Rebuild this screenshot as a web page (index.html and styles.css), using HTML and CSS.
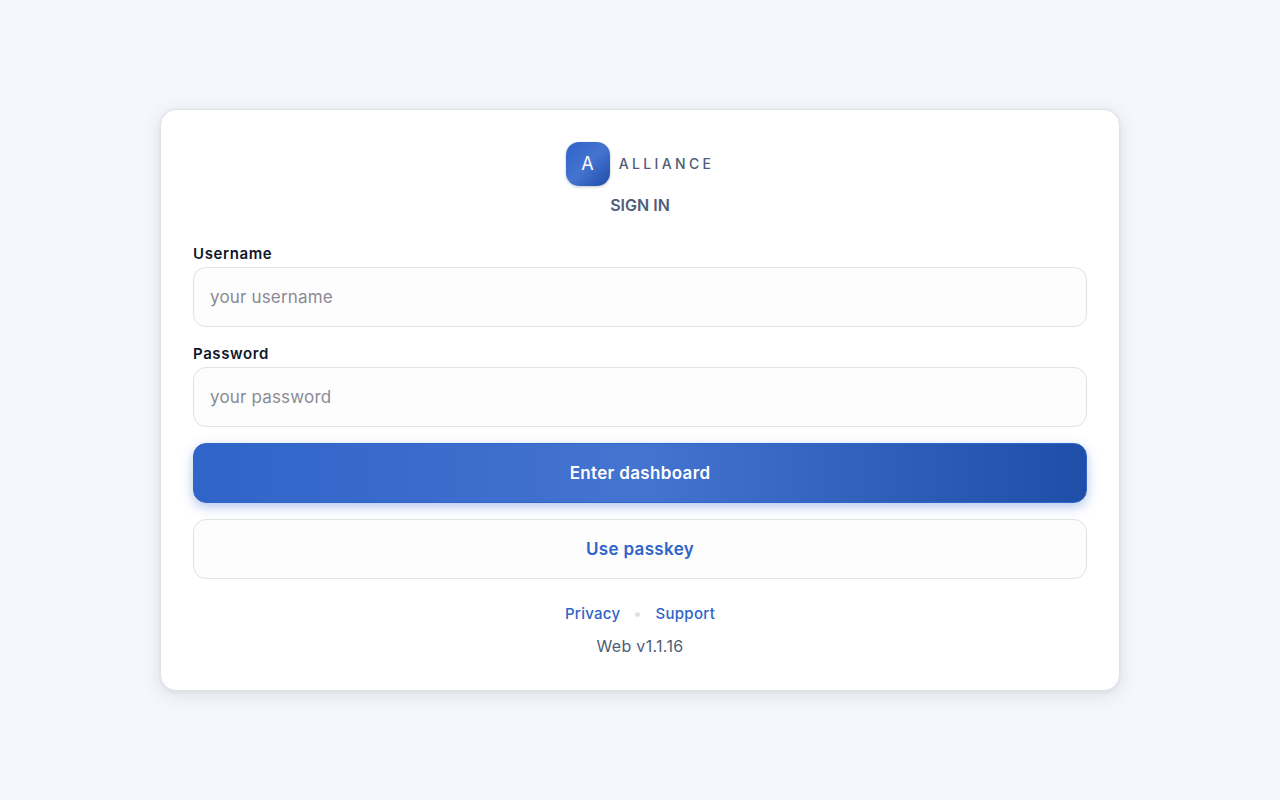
FILE: index.html
```html
<!DOCTYPE html>
<html lang="en">
<head>
<meta charset="utf-8">
<meta name="viewport" content="width=device-width, initial-scale=1">
<title>Alliance – Sign in</title>
<link rel="stylesheet" href="styles.css">
</head>
<body>
<main class="card">
  <header class="head">
    <div class="brand"><span class="mark">A</span><span class="name">ALLIANCE</span></div>
    <h1 class="title">SIGN IN</h1>
  </header>
  <form class="form">
    <div class="field">
      <label class="label" for="username">Username</label>
      <input class="input" id="username" type="text" placeholder="your username">
    </div>
    <div class="field">
      <label class="label" for="password">Password</label>
      <input class="input" id="password" type="password" placeholder="your password">
    </div>
    <button class="btn primary" type="submit">Enter dashboard</button>
    <button class="btn secondary" type="button">Use passkey</button>
  </form>
  <footer class="foot">
    <nav class="links"><a class="link" href="#">Privacy</a><span class="dot"></span><a class="link" href="#">Support</a></nav>
    <p class="version">Web v1.1.16</p>
  </footer>
</main>
</body>
</html>
```
FILE: styles.css
```css
* { box-sizing: border-box; }
body {
  margin: 0;
  min-height: 100vh;
  display: flex;
  align-items: center;
  justify-content: center;
  background: #f5f7fc;
  color: #0f172a;
  font-family: Inter, sans-serif;
  font-size: 17px;
  letter-spacing: 0.01em;
}
.card {
  width: 75%;
  padding: 32px;
  background: #fff;
  border: 1px solid #dfe2e7;
  border-radius: 16px;
  box-shadow: 0 4px 20px rgba(15, 23, 42, 0.1), 0 1px 4px rgba(15, 23, 42, 0.06);
}
.head { display: flex; flex-direction: column; align-items: center; gap: 8px; }
.brand { display: flex; align-items: center; gap: 9px; }
.mark {
  display: grid;
  place-items: center;
  width: 44px;
  height: 44px;
  border-radius: 13px;
  background: linear-gradient(135deg, #2f64c8, #4573d0 50%, #1e4ea8);
  box-shadow: 0 1px 3px rgba(15, 23, 42, 0.25);
  color: #fff;
  font-size: 18px;
  line-height: 22px;
}
.name { color: #4f5d78; font-size: 14px; line-height: 20px; font-weight: 500; letter-spacing: 0.24em; }
.title { margin: 0; color: #4f5d78; font-size: 16px; line-height: 22px; font-weight: 600; letter-spacing: 0; }
.form { display: flex; flex-direction: column; gap: 16px; margin-top: 27px; }
.field { display: flex; flex-direction: column; gap: 2px; }
.label { font-size: 15px; line-height: 22px; font-weight: 600; letter-spacing: 0.04em; }
.input, .btn {
  width: 100%;
  height: 60px;
  border: 1px solid #e0e2e6;
  border-radius: 13px;
  background: #fdfdfd;
  font: inherit;
  letter-spacing: inherit;
}
.input { padding: 0 16px; color: #0f172a; }
.input::placeholder { color: #8a8a94; }
.btn { font-weight: 600; letter-spacing: 0.02em; }
.primary {
  border-color: #2f64c8;
  background: linear-gradient(90deg, #2f64c8, #4573d0 50%, #1e4ea8);
  color: #fff;
  box-shadow: 0 4px 12px rgba(47, 100, 200, 0.36);
}
.secondary { color: #2f64c8; }
.foot { display: flex; flex-direction: column; align-items: center; gap: 8px; margin-top: 23px; }
.links { display: flex; align-items: center; gap: 15px; line-height: 24px; }
.link { color: #2f64c8; font-size: 15px; font-weight: 500; letter-spacing: 0.02em; text-decoration: none; }
.dot { width: 5px; height: 5px; border-radius: 50%; background: #dfe2e7; }
.version { margin: 0; color: #4f5d78; font-size: 16px; line-height: 24px; letter-spacing: 0.02em; }
```
